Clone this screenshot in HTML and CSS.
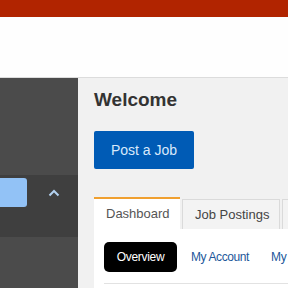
FILE: index.html
```html
<!DOCTYPE html>
<html>
<head>
<meta charset="utf-8">
<link rel="stylesheet" href="styles.css">
</head>
<body>
<div class="topbar"></div>
<header class="header"></header>
<div class="layout">
  <aside class="sidebar">
    <div class="side-row">
      <div class="side-input"></div>
      <svg class="chevron" width="12" height="8" viewBox="0 0 12 8"><path d="M1.5 6.5 L6 2 L10.5 6.5" fill="none" stroke="#b3d1ef" stroke-width="2"/></svg>
    </div>
  </aside>
  <main class="main">
    <h1 class="title">Welcome</h1>
    <button class="btn-primary">Post a Job</button>
    <div class="tabs">
      <div class="tab active">Dashboard</div>
      <div class="tab">Job Postings</div>
      <div class="tab">Candidates</div>
    </div>
    <div class="panel">
      <nav class="subnav">
        <span class="pill">Overview</span>
        <span class="sublink">My Account</span>
        <span class="sublink">My Profile</span>
      </nav>
    </div>
  </main>
</div>
</body>
</html>
```
FILE: styles.css
```css
html, body { margin: 0; padding: 0; }
body {
  width: 288px;
  height: 288px;
  overflow: hidden;
  font-family: "Liberation Sans", Arial, sans-serif;
  background: #f1f1f1;
}
.topbar { height: 17px; background: #b12400; }
.header { height: 60px; background: #fefefe; border-bottom: 1px solid #dcdcdc; }
.layout { display: flex; height: 210px; }
.sidebar {
  width: 78px;
  flex: none;
  background: #4b4b4b;
  padding-top: 97px;
  box-sizing: border-box;
}
.side-row {
  height: 62px;
  background: #3f3f3f;
  padding-top: 3px;
  box-sizing: border-box;
  display: flex;
  align-items: flex-start;
}
.side-input {
  width: 27px;
  height: 29px;
  flex: none;
  background: #92c2f6;
  border-radius: 0 3px 3px 0;
}
.chevron { flex: none; margin: 11px 0 0 21px; }
.main {
  flex: 1;
  padding: 10px 0 0 16px;
  min-width: 0;
  overflow: hidden;
}
.title {
  margin: 0;
  font-size: 19px;
  line-height: 24px;
  font-weight: bold;
  color: #333;
}
.btn-primary {
  display: block;
  margin-top: 19px;
  width: 100px;
  height: 38px;
  border: none;
  border-radius: 2px;
  background: #005bb5;
  color: #d9e9fb;
  font-family: "Liberation Sans", Arial, sans-serif;
  font-size: 14px;
  padding: 0;
}
.tabs {
  display: flex;
  margin-top: 28px;
  align-items: flex-end;
  white-space: nowrap;
}
.tab {
  height: 29px;
  line-height: 29px;
  padding: 0 12px;
  background: #f3f3f3;
  border: 1px solid #dadada;
  border-bottom: none;
  font-size: 13px;
  color: #444;
  margin-right: 2px;
}
.tab:first-child { width: 62px; }
.tab:nth-child(2) { width: 72px; }
.tab.active {
  height: 30px;
  background: #fff;
  border: none;
  border-top: 2px solid #f0a030;
  line-height: 30px;
  color: #555;
}
.panel {
  background: #fff;
  padding: 13px 0 0 10px;
  height: 60px;
}
.subnav {
  display: flex;
  align-items: center;
  height: 30px;
  border-bottom: 1px solid #e2e2e2;
  padding-bottom: 11px;
  white-space: nowrap;
}
.pill {
  width: 73px;
  height: 30px;
  line-height: 30px;
  text-align: center;
  background: #000;
  color: #fff;
  border-radius: 5px;
  font-size: 12px;
  letter-spacing: -0.3px;
  flex: none;
  margin-right: 14px;
}
.sublink {
  font-size: 12px;
  color: #22579a;
  letter-spacing: -0.4px;
  margin-right: 22px;
}
```
